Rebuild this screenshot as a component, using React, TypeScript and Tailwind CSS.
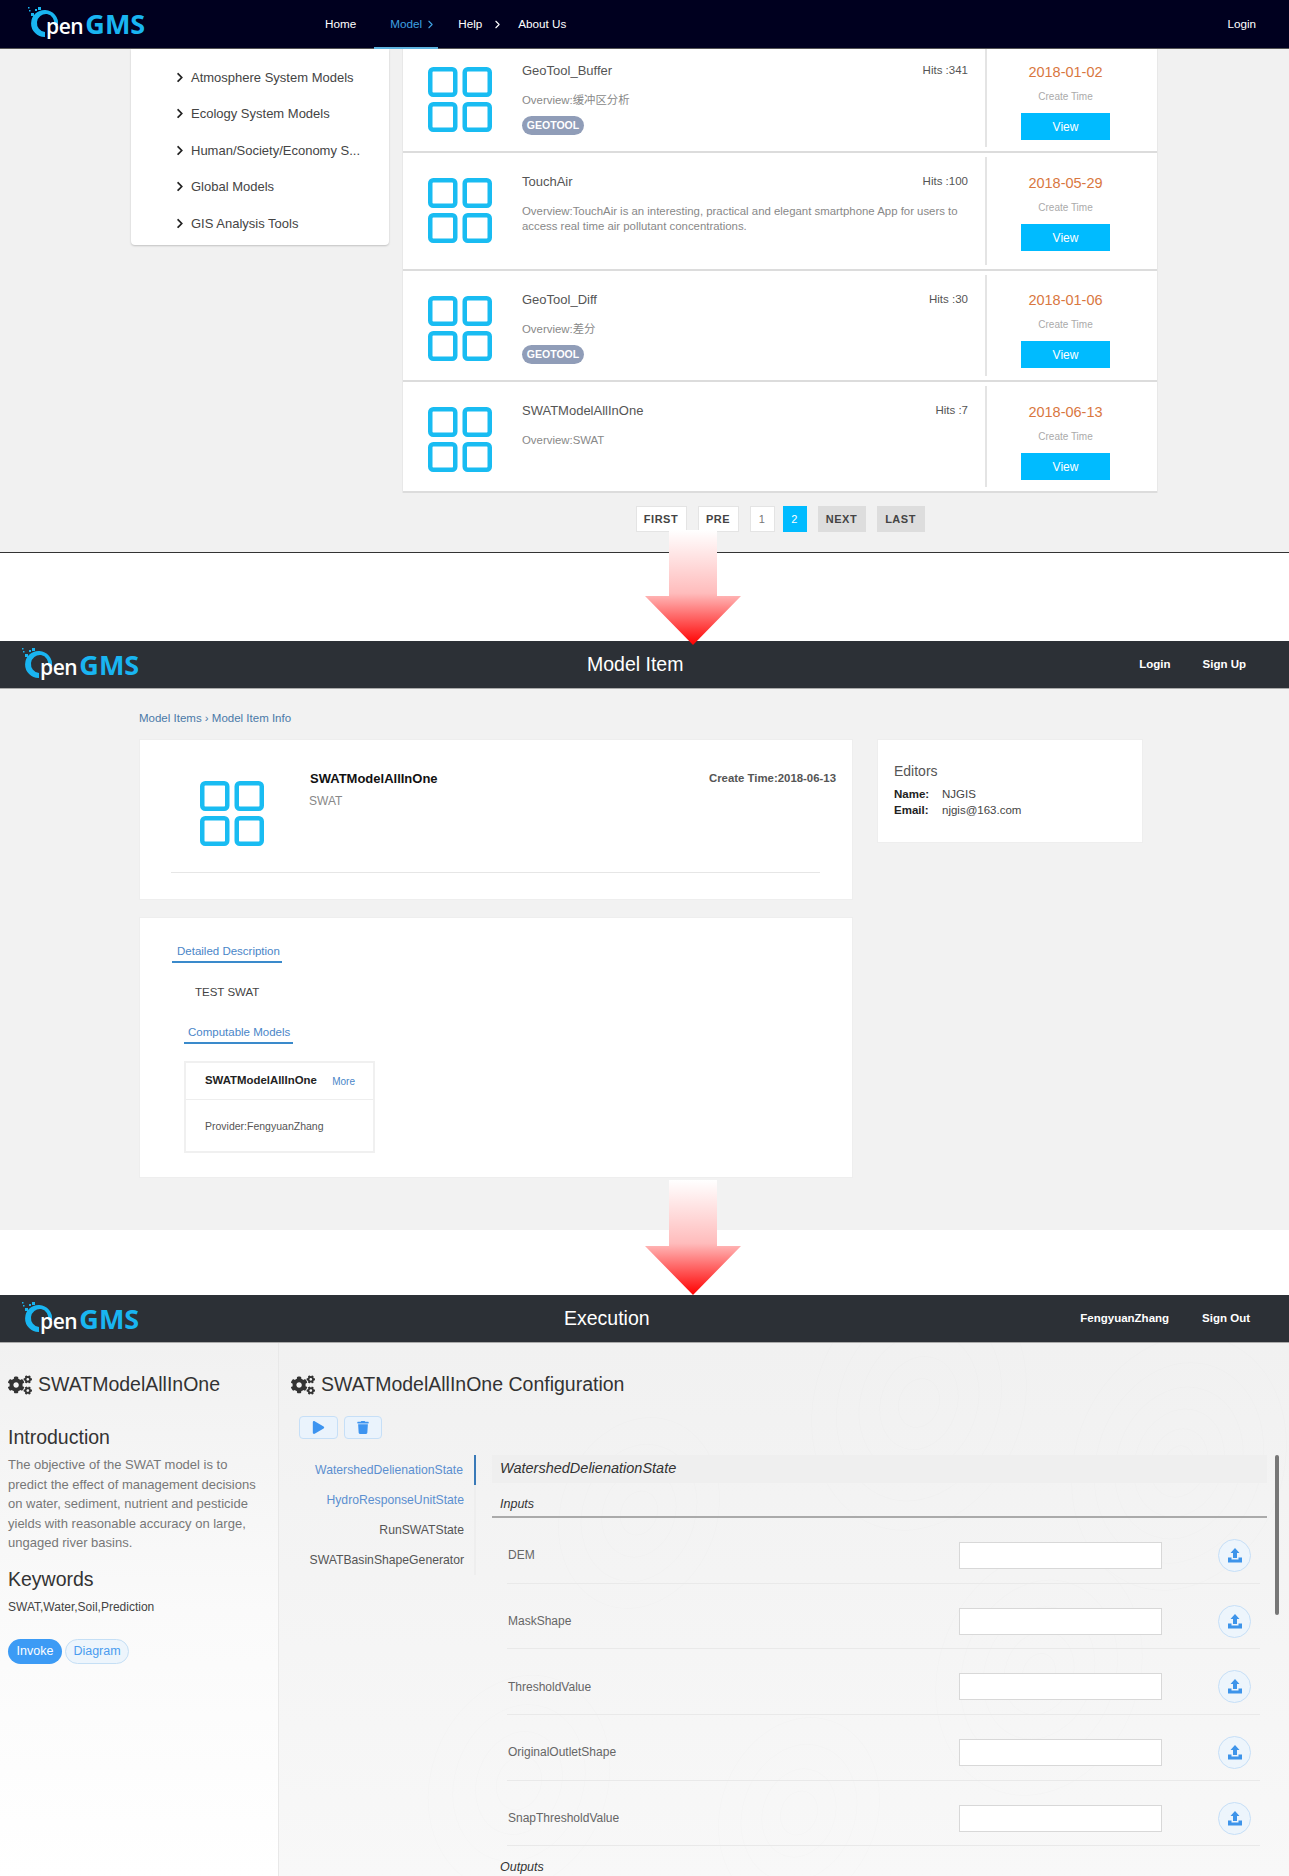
import React from 'react';
import { ChevronRight } from 'lucide-react';
import { FaChevronRight, FaCogs, FaPlay, FaTrash } from 'react-icons/fa';

const categories = [
  'Atmosphere System Models',
  'Ecology System Models',
  'Human/Society/Economy S...',
  'Global Models',
  'GIS Analysis Tools',
];

const models = [
  { name: 'GeoTool_Buffer', hits: 'Hits :341', overview: 'Overview:缓冲区分析', tag: true, date: '2018-01-02', rowClass: 'h-[104px]', iconClass: 'pt-[18px]', textClass: 'pt-[12px]', sideClass: 'mb-[4px]', dateClass: 'mt-[14px]' },
  { name: 'TouchAir', hits: 'Hits :100', overview: 'Overview:TouchAir is an interesting, practical and elegant smartphone App for users to access real time air pollutant concentrations.', tag: false, date: '2018-05-29', rowClass: 'h-[118px]', iconClass: 'pt-[25px]', textClass: 'pt-[19px]', sideClass: 'my-[4px]', dateClass: 'mt-[17px]' },
  { name: 'GeoTool_Diff', hits: 'Hits :30', overview: 'Overview:差分', tag: true, date: '2018-01-06', rowClass: 'h-[111px]', iconClass: 'pt-[25px]', textClass: 'pt-[19px]', sideClass: 'my-[4px]', dateClass: 'mt-[16px]' },
  { name: 'SWATModelAllInOne', hits: 'Hits :7', overview: 'Overview:SWAT', tag: false, date: '2018-06-13', rowClass: 'h-[111px]', iconClass: 'pt-[25px]', textClass: 'pt-[19px]', sideClass: 'my-[4px]', dateClass: 'mt-[17px]' },
];

const inputs = ['DEM', 'MaskShape', 'ThresholdValue', 'OriginalOutletShape', 'SnapThresholdValue'];

// faint contour lines behind the execution panel
const contours = [
  { cx: 900, cy: 120, radii: [14, 28, 44, 62, 82, 104] },
  { cx: 640, cy: 60, radii: [20, 38, 58, 80, 104] },
  { cx: 360, cy: 170, radii: [18, 36, 56, 78] },
  { cx: 760, cy: 330, radii: [16, 34, 54, 76, 100] },
  { cx: 240, cy: 440, radii: [22, 42, 64, 88] },
  { cx: 520, cy: 470, radii: [18, 36, 56, 78] },
];

function Logo() {
  return (
    <div className="relative h-[40px] w-[120px] shrink-0">
      <svg className="absolute left-0 top-0" width="40" height="40" viewBox="0 0 40 40" fill="#19b5f1">
        <path d="M31 21 A13.5 13.5 0 1 0 18 33 L18 28 A9 9 0 0 1 20 10 A9 9 0 0 1 27 21 Z" />
        <rect x="4" y="9" width="3" height="3" />
        <rect x="8" y="5" width="2" height="2" />
        <rect x="1" y="3" width="1.5" height="1.5" />
        <rect x="2" y="6" width="1.5" height="1.5" />
        <rect x="11" y="3" width="3" height="3" />
      </svg>
      <div className="absolute left-[19px] top-[3px] flex items-baseline font-['Open_Sans',sans-serif] leading-[34px]">
        <span className="text-[21px] font-semibold tracking-[-0.4px] text-white">pen</span>
        <span className="ml-[2px] text-[27px] font-bold text-[#19b5f1]">GMS</span>
      </div>
    </div>
  );
}

function GridIcon({ className }: { className: string }) {
  return (
    <svg className={className} width="64" height="65" viewBox="0 0 64 65" fill="none" stroke="#19bcf2" strokeWidth="4.5">
      <rect x="2.25" y="2.25" width="25" height="25.5" rx="3" />
      <rect x="36.75" y="2.25" width="25" height="25.5" rx="3" />
      <rect x="2.25" y="37.25" width="25" height="25.5" rx="3" />
      <rect x="36.75" y="37.25" width="25" height="25.5" rx="3" />
    </svg>
  );
}

function UploadIcon() {
  return (
    <svg width="14" height="15" viewBox="0 0 14 15" fill="#3d94ea">
      <path d="M7 0 L11.5 5 H9 V10 H5 V5 H2.5 Z" />
      <path d="M0 9.5 H3.5 V11.5 H10.5 V9.5 H14 V14.5 H0 Z" />
    </svg>
  );
}

function Arrow({ className }: { className: string }) {
  const id = React.useId();
  return (
    <svg className={className} width="96" height="115" viewBox="0 0 96 115">
      <defs>
        <linearGradient id={id} x1="0" y1="0" x2="0" y2="1">
          <stop offset="0" stopColor="#ffffff" />
          <stop offset="0.55" stopColor="#ffbcbc" />
          <stop offset="1" stopColor="#ff0000" />
        </linearGradient>
      </defs>
      <polygon points="24,0 72,0 72,66 96,66 48,115 0,66 24,66" fill={`url(#${id})`} />
    </svg>
  );
}

function ModelRow({ model }: { model: (typeof models)[number] }) {
  return (
    <div className={`flex border-b-2 border-[#dcdcdc] ${model.rowClass}`}>
      <div className={`w-[119px] shrink-0 pl-[25px] ${model.iconClass}`}>
        <GridIcon className="block" />
      </div>
      <div className={`w-[463px] shrink-0 pr-[17px] ${model.textClass}`}>
        <div className="flex h-5 items-center justify-between">
          <span className="text-[13px] text-[#555]">{model.name}</span>
          <span className="text-[11.5px] text-[#555]">{model.hits}</span>
        </div>
        <p className="mt-[12px] text-[11.4px] leading-[15px] text-[#888]">{model.overview}</p>
        {model.tag && (
          <div className="mt-[8px] flex h-[19px] w-[62px] items-center justify-center rounded-full bg-[#909db8] text-[10.5px] font-bold text-white">
            GEOTOOL
          </div>
        )}
      </div>
      <div className={`flex w-[159px] shrink-0 flex-col items-center border-l-2 border-[#e4e4e4] ${model.sideClass}`}>
        <div className={`flex h-5 items-center text-[14.5px] text-[#d9773f] ${model.dateClass}`}>{model.date}</div>
        <div className="mt-[6px] text-[10px] leading-4 text-[#aaa]">Create Time</div>
        <button className="mt-[8px] h-[27px] w-[89px] shrink-0 bg-[#00bbff] text-[12px] text-white">View</button>
      </div>
    </div>
  );
}

function PageButton({ label, className }: { label: string; className: string }) {
  return (
    <div className={`flex h-[26px] items-center justify-center text-[11px] font-bold tracking-[0.5px] ${className}`}>
      {label}
    </div>
  );
}

function ModelList() {
  return (
    <section className="h-[553px] border-b border-[#333] bg-[#f1f1f1]">
      <header className="flex h-[49px] items-center border-b border-[#555] bg-[#00001f] pl-[27px] text-[11.7px] text-white">
        <Logo />
        <nav className="ml-[178px] flex h-full items-center">
          <span>Home</span>
          <div className="relative ml-[18px] flex h-full w-[64px] items-center pl-[16px] text-[#3ea0e0]">
            Model
            <ChevronRight className="ml-[2px] h-[13px] w-[13px]" />
            <div className="absolute bottom-[-1px] left-0 h-[2px] w-full bg-[#5fb4e0]" />
          </div>
          <span className="ml-[20px]">Help</span>
          <ChevronRight className="ml-[9px] h-[13px] w-[13px]" />
          <span className="ml-[14px]">About Us</span>
        </nav>
        <span className="ml-auto mr-[33px]">Login</span>
      </header>
      <div className="flex pl-[131px]">
        <aside className="h-[196px] w-[258px] rounded-b-sm bg-white pl-[45px] pt-[10px] shadow-[0_1px_2px_rgba(0,0,0,0.2)]">
          {categories.map((c) => (
            <div key={c} className="flex h-[36.5px] items-center text-[13px] text-[#444]">
              <FaChevronRight className="mr-[7px] h-[11px] w-[8px] text-[#222]" />
              {c}
            </div>
          ))}
        </aside>
        <div className="ml-[13px] w-[756px]">
          <div className="border-x border-[#e8e8e8] bg-white">
            {models.map((m) => (
              <ModelRow key={m.name} model={m} />
            ))}
          </div>
          <div className="mt-[13px] flex justify-center text-[#444]">
            <PageButton label="FIRST" className="w-[51px] border border-[#e4e4e4] bg-white" />
            <PageButton label="PRE" className="ml-[11px] w-[41px] border border-[#e4e4e4] bg-white" />
            <PageButton label="1" className="ml-[11px] w-[25px] border border-[#e4e4e4] bg-white font-normal text-[#777]" />
            <PageButton label="2" className="ml-[8px] w-[24px] bg-[#00bbff] font-normal text-white" />
            <PageButton label="NEXT" className="ml-[11px] w-[48px] bg-[#dddddd]" />
            <PageButton label="LAST" className="ml-[11px] w-[48px] bg-[#dddddd]" />
          </div>
        </div>
      </div>
    </section>
  );
}

function DarkHeader({ title, titleClass, right }: { title: string; titleClass: string; right: React.ReactNode }) {
  return (
    <header className="relative flex h-[48px] items-center border-b border-[#aaa] bg-[#2c3036] pl-[21px] text-white">
      <Logo />
      <h1 className={`absolute text-[19.5px] ${titleClass}`}>{title}</h1>
      {right}
    </header>
  );
}

function ModelItem() {
  return (
    <section>
      <div className="h-[88px] bg-white" />
      <DarkHeader
        title="Model Item"
        titleClass="left-[587px]"
        right={
          <div className="ml-auto flex pr-[43px] text-[11.5px] font-bold">
            <span>Login</span>
            <span className="ml-[32px]">Sign Up</span>
          </div>
        }
      />
      <div className="flex h-[541px] gap-[24px] bg-[#f2f2f2] pl-[139px]">
        <div className="w-[714px]">
          <div className="h-[50px] pt-[21px] text-[11.5px] leading-4 text-[#4a79a8]">Model Items › Model Item Info</div>
          <div className="relative h-[161px] border border-[#eee] bg-white pl-[60px] pt-[41px]">
            <GridIcon className="block" />
            <div className="absolute left-[170px] top-[29px] text-[13px] font-bold leading-5 text-[#111]">SWATModelAllInOne</div>
            <div className="absolute left-[169px] top-[53px] text-[12px] leading-4 text-[#888]">SWAT</div>
            <div className="absolute right-[16px] top-[30px] text-[11.4px] font-bold leading-4 text-[#555]">Create Time:2018-06-13</div>
            <div className="absolute bottom-[26px] left-[31px] right-[32px] border-t border-[#e6e6e6]" />
          </div>
          <div className="mt-[17px] h-[261px] border border-[#eee] bg-white pl-[32px] pt-[25px]">
            <div className="w-[110px] whitespace-nowrap border-b-2 border-[#3a8acb] pb-[2px] pl-[5px] text-[11.5px] leading-4 text-[#4a86c8]">Detailed Description</div>
            <div className="ml-[23px] mt-[21px] text-[11.5px] leading-4 text-[#444]">TEST SWAT</div>
            <div className="ml-[12px] mt-[24px] w-[109px] whitespace-nowrap border-b-2 border-[#3a8acb] pb-[2px] pl-[4px] text-[11.5px] leading-4 text-[#4a86c8]">Computable Models</div>
            <div className="ml-[12px] mt-[17px] h-[92px] w-[191px] border-2 border-[#f0f0f0]">
              <div className="flex h-[37px] items-center justify-between border-b border-[#eee] pl-[19px] pr-[18px]">
                <span className="text-[11.4px] font-bold text-[#222]">SWATModelAllInOne</span>
                <span className="text-[10px] text-[#4a86c8]">More</span>
              </div>
              <div className="pl-[19px] pt-[18px] text-[10.5px] leading-4 text-[#555]">Provider:FengyuanZhang</div>
            </div>
          </div>
        </div>
        <div className="mt-[50px] h-[104px] w-[266px] border border-[#eee] bg-white pl-[16px] pt-[23px]">
          <div className="text-[14px] leading-4 text-[#555]">Editors</div>
          <div className="mt-[8px] flex h-4 items-center text-[11.5px] text-[#444]">
            <span className="w-[48px] font-bold text-[#222]">Name:</span>NJGIS
          </div>
          <div className="flex h-4 items-center text-[11.5px] text-[#444]">
            <span className="w-[48px] font-bold text-[#222]">Email:</span>njgis@163.com
          </div>
        </div>
      </div>
    </section>
  );
}

function Execution() {
  return (
    <section>
      <div className="h-[65px] bg-white" />
      <DarkHeader
        title="Execution"
        titleClass="left-[564px]"
        right={
          <div className="ml-auto flex pr-[39px] text-[11.5px] font-bold">
            <span>FengyuanZhang</span>
            <span className="ml-[33px]">Sign Out</span>
          </div>
        }
      />
      <div className="flex h-[533px] overflow-hidden bg-gradient-to-b from-[#f1f1f1] to-[#f8f8f8]">
        <aside className="w-[279px] shrink-0 border-r border-[#e8e8e8] bg-gradient-to-b from-[#f1f1f1] via-[#fafafa] to-white pl-[8px] pt-[27px]">
          <div className="flex h-[30px] items-center text-[19.5px] text-[#333]">
            <FaCogs className="mr-[6px] h-[24px] w-[24px]" />
            SWATModelAllInOne
          </div>
          <h2 className="mt-[25px] text-[19.5px] leading-[24px] text-[#333]">Introduction</h2>
          <p className="mt-[6px] w-[260px] text-[13px] leading-[19.5px] text-[#777]">
            The objective of the SWAT model is to predict the effect of management decisions on water, sediment, nutrient and pesticide yields with reasonable accuracy on large, ungaged river basins.
          </p>
          <h2 className="mt-[14px] text-[19.5px] leading-[24px] text-[#333]">Keywords</h2>
          <p className="mt-[8px] text-[12px] leading-4 text-[#444]">SWAT,Water,Soil,Prediction</p>
          <div className="mt-[24px] flex gap-[3px] text-[12.5px]">
            <button className="h-[25px] w-[54px] rounded-full bg-[#3c9bf5] text-white">Invoke</button>
            <button className="h-[25px] w-[64px] rounded-full border border-[#c5dff5] bg-[#edf5fc] text-[#4a9cef]">Diagram</button>
          </div>
        </aside>
        <main className="relative min-w-0 flex-1 pl-[12px] pt-[27px]">
          <svg className="absolute left-0 top-0" width="1010" height="533" viewBox="0 0 1010 533" fill="none" stroke="#000000" strokeOpacity="0.012" strokeWidth="1">
            {contours.map((c) =>
              c.radii.map((r) => (
                <ellipse key={`${c.cx}-${r}`} cx={c.cx} cy={c.cy} rx={r} ry={r * 1.25} transform={`rotate(20 ${c.cx} ${c.cy})`} />
              )),
            )}
          </svg>
          <div className="relative">
            <div className="flex h-[30px] items-center text-[19.5px] text-[#333]">
              <FaCogs className="mr-[6px] h-[24px] w-[24px]" />
              SWATModelAllInOne Configuration
            </div>
            <div className="ml-[8px] mt-[16px] flex gap-[6px]">
              <button className="flex h-[23px] w-[39px] items-center justify-center rounded border border-[#c6dff7] bg-[#eaf3fc] text-[#3d94f0]">
                <FaPlay className="h-[13px] w-[13px]" />
              </button>
              <button className="flex h-[23px] w-[38px] items-center justify-center rounded border border-[#c6dff7] bg-[#eaf3fc] text-[#3d94f0]">
                <FaTrash className="h-[13px] w-[12px]" />
              </button>
            </div>
            <div className="mt-[16px] flex">
              <div className="w-[185px] shrink-0 self-start border-r-2 border-[#eee] text-right text-[12.2px]">
                <div className="-mr-[2px] flex h-[30px] items-center justify-end border-r-2 border-[#3a7ab8] pr-[11px] text-[#5b8fd0]">WatershedDelienationState</div>
                <div className="flex h-[30px] items-center justify-end pr-[10px] text-[#5b8fd0]">HydroResponseUnitState</div>
                <div className="flex h-[30px] items-center justify-end pr-[10px] text-[#555]">RunSWATState</div>
                <div className="flex h-[30px] items-center justify-end pr-[10px] text-[#555]">SWATBasinShapeGenerator</div>
              </div>
              <div className="ml-[16px] w-[775px] shrink-0">
                <div className="flex h-[28px] items-center bg-[#efefef] pl-[8px] text-[14.5px] italic text-[#333]">WatershedDelienationState</div>
                <div className="flex h-[35px] items-center border-b-2 border-[#aaa] pl-[8px] pt-[9px] text-[12.5px] italic text-[#333]">Inputs</div>
                <div className="pl-[15px] pr-[7px]">
                  {inputs.map((name) => (
                    <div key={name} className="flex h-[65.7px] items-center border-b border-[#e9e9e9] pt-[10px] text-[12px] text-[#666]">
                      <span className="w-[452px] pl-[1px]">{name}</span>
                      <div className="h-[27px] w-[203px] border border-[#d8d8d8] bg-white" />
                      <div className="ml-[56px] flex h-[33px] w-[33px] items-center justify-center rounded-full border border-[#c6dff7] bg-[#edf5fc]">
                        <UploadIcon />
                      </div>
                    </div>
                  ))}
                </div>
                <div className="mt-[13px] pl-[8px] text-[12.5px] italic leading-4 text-[#333]">Outputs</div>
              </div>
            </div>
          </div>
          <div className="absolute right-[10px] top-[112px] h-[160px] w-[4px] rounded-full bg-[#777]" />
        </main>
      </div>
    </section>
  );
}

export default function App() {
  return (
    <div className="relative h-[1876px] w-full overflow-hidden font-['Liberation_Sans','Noto_Sans_CJK_SC',sans-serif]">
      <ModelList />
      <ModelItem />
      <Execution />
      <Arrow className="absolute left-[645px] top-[530px]" />
      <Arrow className="absolute left-[645px] top-[1180px]" />
    </div>
  );
}
